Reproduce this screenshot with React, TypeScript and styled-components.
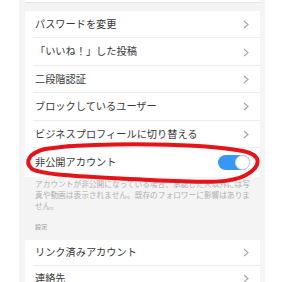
import styled, { createGlobalStyle } from "styled-components";

const GlobalStyle = createGlobalStyle`
    html, body {
        margin: 0;
        padding: 0;
        background: #fff;
    }
    body {
        font-family: "Noto Sans CJK JP", "Noto Sans", sans-serif;
    }
`;

const Page = styled.div`
    position: relative;
    width: 300px;
    height: 282px;
    overflow: hidden;
    padding: 0 35px 0 19px;
    box-sizing: border-box;
`;

const Panel = styled.div`
    background: #f4f4f4;
    height: 100%;
    padding: 0 5px 0 6px;
`;

const TopCard = styled.div`
    height: 2px;
    background: #fff;
    border-bottom: 1px solid #e4e4e4;
    margin-bottom: 8px;
`;

const Group = styled.div`
    background: #fff;
`;

const Row = styled.div<{ h?: number; last?: boolean }>`
    height: ${(p) => p.h ?? 27.4}px;
    box-sizing: border-box;
    display: flex;
    align-items: center;
    justify-content: space-between;
    padding: 0 11px 0 10px;
    position: relative;
    &::after {
        content: "";
        display: ${(p) => (p.last ? "none" : "block")};
        position: absolute;
        left: 8px;
        right: 0;
        bottom: 0;
        height: 1px;
        background: #ececec;
    }
`;

const Label = styled.span`
    font-size: 10.2px;
    color: #383838;
    line-height: 1;
    margin-top: -1px;
`;

const Chevron = () => (
    <svg width="6" height="9" viewBox="0 0 6 9">
        <polyline points="1,1 5,4.5 1,8" fill="none" stroke="#a4a4a4" strokeWidth="1.1" />
    </svg>
);

const Toggle = styled.div`
    width: 32px;
    height: 15px;
    border-radius: 8px;
    background: #3897f0;
    position: relative;
    margin-right: -1px;
    &::after {
        content: "";
        position: absolute;
        right: 0;
        top: 0;
        width: 15px;
        height: 15px;
        box-sizing: border-box;
        border-radius: 50%;
        background: #fff;
        border: 1px solid #cfd8e0;
    }
`;

const Note = styled.p`
    margin: 1px 0 0;
    padding: 0 0 0 10px;
    width: 217px;
    font-size: 7.7px;
    line-height: 11px;
    color: #b0b0b0;
`;

const SectionHead = styled.div`
    height: 29px;
    display: flex;
    align-items: center;
    padding: 3px 0 0 10px;
    box-sizing: border-box;
    font-size: 6.2px;
    color: #9c9c9c;
`;

const Scribble = styled.svg`
    position: absolute;
    left: 0;
    top: 0;
    pointer-events: none;
`;

const accountRows = [
    "パスワードを変更",
    "「いいね！」した投稿",
    "二段階認証",
    "ブロックしているユーザー",
    "ビジネスプロフィールに切り替える",
];

const settingRows = ["リンク済みアカウント", "連絡先"];

function App() {
    return (
        <>
            <GlobalStyle />
            <Page>
                <Panel>
                    <TopCard />
                    <Group>
                        {accountRows.map((t) => (
                            <Row key={t}>
                                <Label>{t}</Label>
                                <Chevron />
                            </Row>
                        ))}
                        <Row h={29} last>
                            <Label>非公開アカウント</Label>
                            <Toggle />
                        </Row>
                    </Group>
                    <Note>
                        アカウントが非公開になっている場合、承認した人以外には写真や動画は表示されません。既存のフォロワーに影響はありません。
                    </Note>
                    <SectionHead>設定</SectionHead>
                    <Group>
                        {settingRows.map((t, i) => (
                            <Row key={t} h={26} last={i === settingRows.length - 1}>
                                <Label>{t}</Label>
                                <Chevron />
                            </Row>
                        ))}
                    </Group>
                </Panel>
                <Scribble width="300" height="282" viewBox="0 0 300 282">
                    <path
                        d="M 60 147 C 110 143, 200 143, 243 151 C 262 155, 262 166, 246 175 C 232 183, 212 183, 150 180 C 95 177, 45 176, 32 169 C 24 162, 29 153, 45 149 L 70 146"
                        fill="none"
                        stroke="#e5141b"
                        strokeWidth="4"
                        strokeLinecap="round"
                        strokeLinejoin="round"
                    />
                </Scribble>
            </Page>
        </>
    );
}

export default App;
